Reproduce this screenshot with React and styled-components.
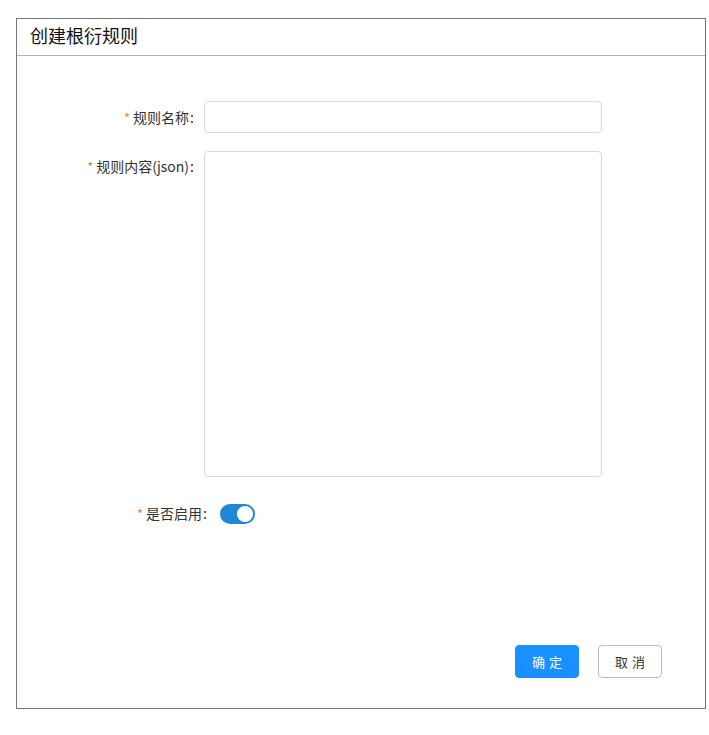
import styled, { createGlobalStyle } from 'styled-components'

const GlobalStyle = createGlobalStyle`
  body {
    margin: 0;
    background: #fff;
    font-family: "Noto Sans CJK SC", "Noto Sans", sans-serif;
    color: #333;
  }
`

const Page = styled.div`
  padding: 18px 0 0 16px;
`

const Modal = styled.div`
  width: 690px;
  height: 691px;
  box-sizing: border-box;
  border: 1px solid #767676;
  display: flex;
  flex-direction: column;
`

const Header = styled.div`
  height: 37px;
  box-sizing: border-box;
  border-bottom: 1px solid #b4b4b4;
  padding: 0 0 4px 13px;
  display: flex;
  align-items: center;
  font-size: 18px;
  color: #111;
`

const Body = styled.div`
  flex: 1;
  display: flex;
  flex-direction: column;
  gap: 18px;
  padding-top: 45px;
`

const Row = styled.div`
  display: flex;
  align-items: ${(p) => (p.$top ? 'flex-start' : 'center')};
  margin-top: ${(p) => p.$offset || 0}px;
`

const Label = styled.label`
  width: ${(p) => p.$width || 180}px;
  margin-right: ${(p) => p.$gap || 7}px;
  text-align: right;
  font-size: 14px;
  line-height: ${(p) => (p.$top ? '30px' : '20px')};
  color: #333;
  white-space: nowrap;
`

const Star = styled.span`
  color: #e8863c;
  margin-right: 3px;
  font-size: 13px;
`

const Colon = styled.span`
  margin: 0 3px 0 1px;
`

const Input = styled.input`
  width: 398px;
  height: 32px;
  box-sizing: border-box;
  border: 1px solid #d9d9d9;
  border-radius: 4px;
  padding: 4px 10px;
  outline: none;
`

const TextArea = styled.textarea`
  width: 398px;
  height: 326px;
  box-sizing: border-box;
  border: 1px solid #d9d9d9;
  border-radius: 4px;
  padding: 4px 10px;
  resize: none;
  outline: none;
`

const Switch = styled.div`
  width: 35px;
  height: 20px;
  border-radius: 10px;
  background: #2186d4;
  position: relative;

  &::after {
    content: '';
    position: absolute;
    right: 2px;
    top: 2px;
    width: 16px;
    height: 16px;
    border-radius: 50%;
    background: #fff;
  }
`

const Footer = styled.div`
  display: flex;
  justify-content: flex-end;
  gap: 19px;
  padding: 0 43px 30px 0;
`

const Button = styled.button`
  width: 64px;
  height: 33px;
  box-sizing: border-box;
  border-radius: 4px;
  font-family: inherit;
  font-size: 13px;
  letter-spacing: 4px;
  text-indent: 4px;
  cursor: pointer;
  border: 1px solid ${(p) => (p.$primary ? '#1890ff' : '#bdbdbd')};
  background: ${(p) => (p.$primary ? '#1890ff' : '#fff')};
  color: ${(p) => (p.$primary ? '#fff' : '#333')};
`

export default function App() {
  return (
    <>
      <GlobalStyle />
      <Page>
        <Modal>
          <Header>创建根衍规则</Header>
          <Body>
            <Row>
              <Label>
                <Star>*</Star>规则名称<Colon>:</Colon>
              </Label>
              <Input />
            </Row>
            <Row $top>
              <Label $top>
                <Star>*</Star>规则内容(json)<Colon>:</Colon>
              </Label>
              <TextArea />
            </Row>
            <Row $offset={8}>
              <Label $width={193} $gap={10}>
                <Star>*</Star>是否启用<Colon>:</Colon>
              </Label>
              <Switch />
            </Row>
          </Body>
          <Footer>
            <Button $primary>确定</Button>
            <Button>取消</Button>
          </Footer>
        </Modal>
      </Page>
    </>
  )
}
